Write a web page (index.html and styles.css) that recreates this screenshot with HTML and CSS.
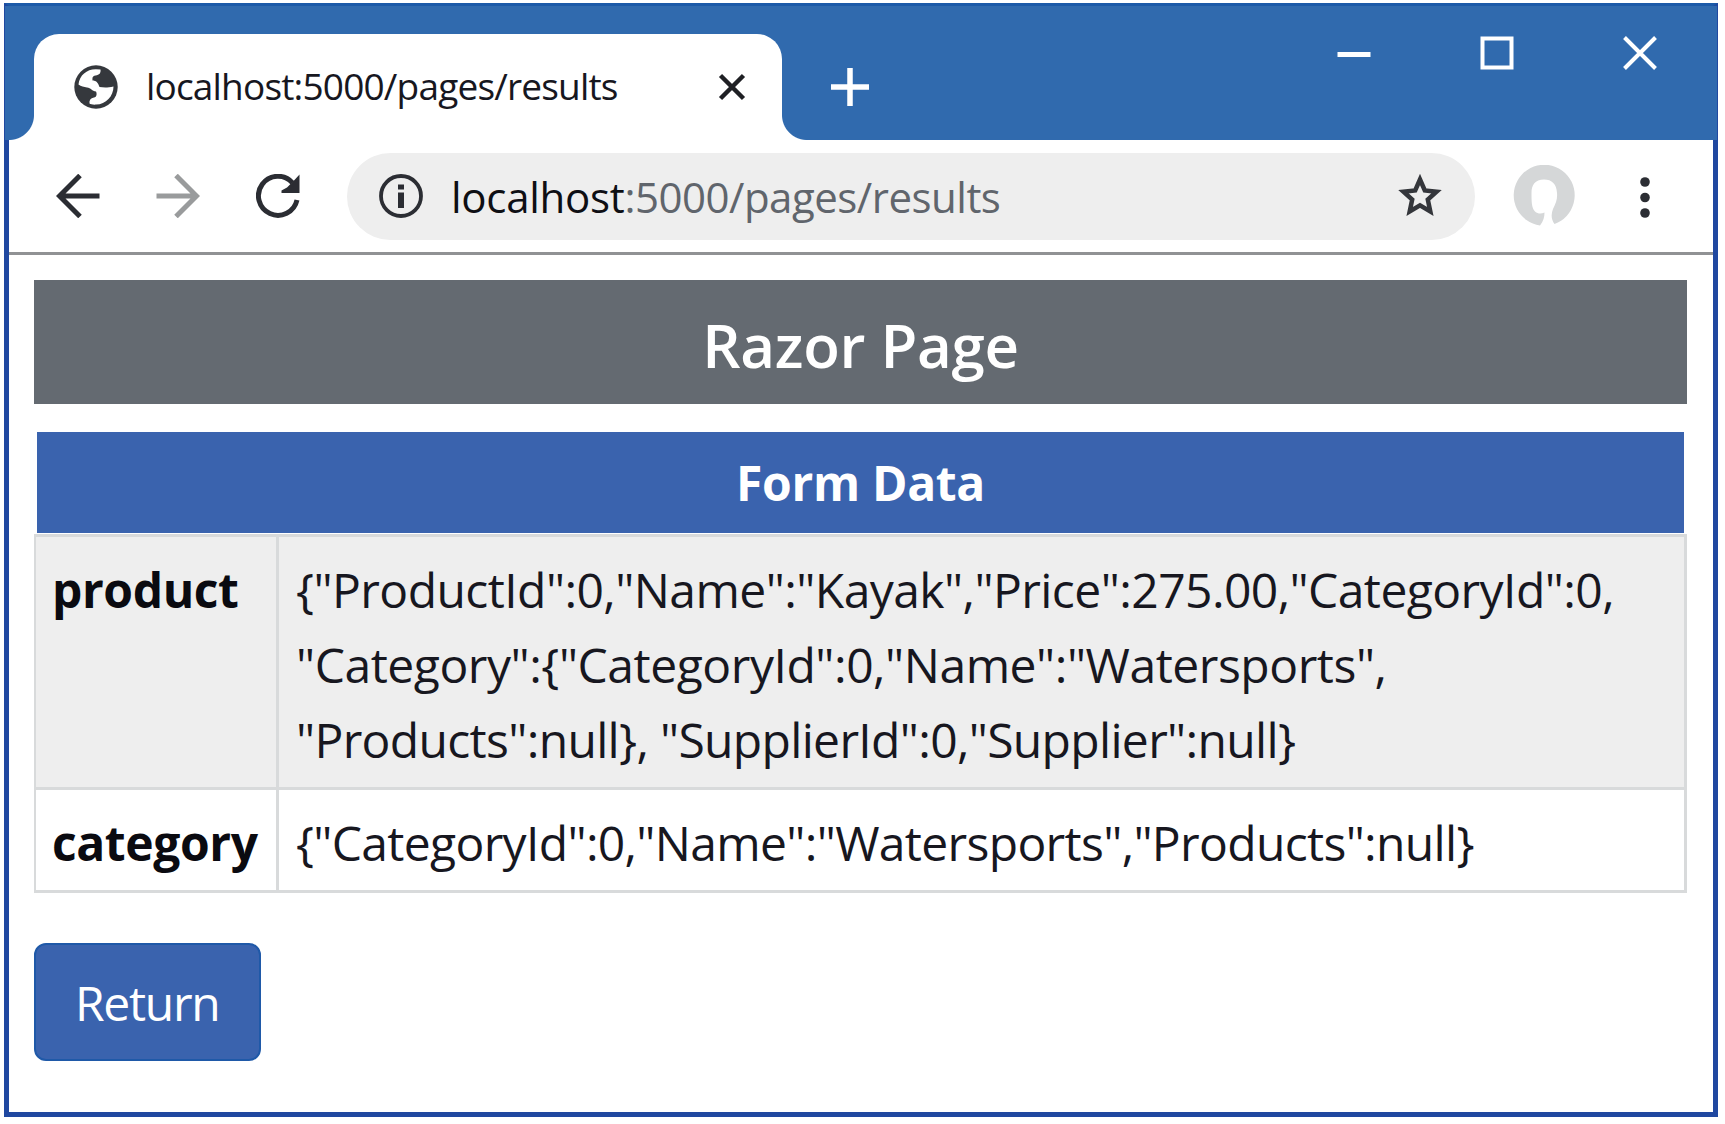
FILE: index.html
```
<!DOCTYPE html>
<html lang="en">
<head>
<meta charset="utf-8">
<title>localhost:5000/pages/results</title>
<link rel="stylesheet" href="styles.css">
</head>
<body>
<div class="window">
  <header class="titlebar">
    <div class="tab">
      <svg class="globe" width="44" height="44" viewBox="0 0 44 44">
        <circle cx="22" cy="22" r="21.7" fill="#35383d"/>
        <path fill="#fff" d="M4.500 19.500C5.500 10 13 4 22 4.200L26.500 4.500C27 8 25.500 10 21.500 10.500C18 11 18.500 13 18.500 15.500C22 15.500 24 17.500 25.500 22C29 22.500 33 23 39.500 21.500C39.500 31 32 39.500 22 39.600C19 39.800 16.500 39.300 15.500 38.600C15 35 16.500 33 20 32.500C23 32 23 28.500 22 26.500C18 26 17 23 13 22.500C10 22 7 21.500 4.500 19.500Z"/>
      </svg>
      <span class="tab-title">localhost:5000/pages/results</span>
      <svg class="tab-close" width="28" height="28" viewBox="0 0 28 28"><path d="M2.500 2.500L25.500 25.500M25.500 2.500L2.500 25.500"/></svg>
    </div>
    <svg class="new-tab" width="40" height="40" viewBox="0 0 40 40"><path d="M20 1V39M1 20H39"/></svg>
    <div class="controls">
      <svg width="34" height="34" viewBox="0 0 34 34"><path d="M.5 18.500H33.500" stroke-width="5"/></svg>
      <svg width="34" height="34" viewBox="0 0 34 34"><rect x="2.500" y="2.500" width="29" height="29"/></svg>
      <svg width="34" height="34" viewBox="0 0 34 34"><path d="M1.500 1.500L32.500 32.500M32.500 1.500L1.500 32.500"/></svg>
    </div>
  </header>

  <nav class="toolbar">
    <svg class="nav-icon" width="44" height="44" viewBox="0 0 44 44"><path d="M43.500 22H4M24 1.500L3.500 22L24 42.500"/></svg>
    <svg class="nav-icon forward" width="44" height="44" viewBox="0 0 44 44"><path d="M.5 22H40M20 1.500L40.500 22L20 42.500"/></svg>
    <svg class="nav-icon" width="44" height="44" viewBox="0 0 44 44"><path d="M41 26A19.500 19.500 0 1 1 36.500 8.800"/><path class="solid" d="M43.500 .5V19H25.500V16.500L31 13.500L38 6.500Z"/></svg>
    <div class="address">
      <svg class="info" width="44" height="44" viewBox="0 0 44 44"><circle cx="22" cy="22" r="20"/><path class="solid" d="M19 10.500H25V15.500H19ZM19 18.500H25V34H19Z"/></svg>
      <span class="url"><span class="host">localhost</span>:5000/pages/results</span>
      <svg class="star" width="46" height="46" viewBox="0 0 46 46"><path d="M23 6.500L27.800 17.500L39.500 18.700L30.800 26.500L33.300 38.500L23 32.300L12.700 38.500L15.200 26.500L6.500 18.700L18.200 17.500Z"/></svg>
    </div>
    <svg class="avatar" width="62" height="62" viewBox="0 0 62 62">
      <path fill="#d5d7d8" d="M27 60.500A30.500 30.500 0 1 1 41.500 59C38 54 38 49 40 44C43 38 44.500 34 44 28C43.500 19 39 14.500 31 14.500C22 14.500 18.500 20 18.500 28C18.500 36 18.500 43 22 46.500C25 49 28 49 31.500 47.500C31.500 52 30.500 56 27 60.500Z"/>
    </svg>
    <svg class="menu" width="10" height="44" viewBox="0 0 10 44"><circle cx="5" cy="8" r="4.800"/><circle cx="5" cy="23.500" r="4.800"/><circle cx="5" cy="39" r="4.800"/></svg>
  </nav>

  <main class="page">
    <h1 class="heading">Razor Page</h1>
    <table class="data">
      <colgroup><col class="key-column"><col></colgroup>
      <thead><tr><th colspan="2">Form Data</th></tr></thead>
      <tbody>
        <tr class="striped">
          <th>product</th>
          <td>{"ProductId":0,"Name":"Kayak","Price":275.00,"CategoryId":0,<br><span class="second">"Category":{"CategoryId":0,"Name":"Watersports",</span><br><span class="third">"Products":null}, "SupplierId":0,"Supplier":null}</span></td>
        </tr>
        <tr>
          <th>category</th>
          <td class="last">{"CategoryId":0,"Name":"Watersports","Products":null}</td>
        </tr>
      </tbody>
    </table>
    <a class="button">Return</a>
  </main>
</div>
</body>
</html>
```
FILE: styles.css
```
* { box-sizing: border-box; }

body {
  margin: 0;
  padding: 3px 0 0 4px;
  background: #fff;
  color: #17171f;
  font-family: "Open Sans", "Noto Sans", sans-serif;
}

svg { display: block; flex: none; fill: none; }

.window {
  width: 1714px;
  height: 1114px;
  border: 5px solid #2048a0;
  border-top: 3px solid #1c5aa8;
  background: #fff;
}

/* Title bar */
.titlebar {
  display: flex;
  align-items: flex-end;
  height: 134px;
  margin: 0 -4px;
  padding-left: 29px;
  background: #306aae;
}

.tab {
  position: relative;
  display: flex;
  align-items: center;
  width: 748px;
  height: 106px;
  padding: 0 36px 0 40px;
  border-radius: 25px 25px 0 0;
  background: #fff;
}

.tab::before,
.tab::after {
  content: "";
  position: absolute;
  bottom: 0;
  width: 25px;
  height: 25px;
}

.tab::before {
  right: 100%;
  background: radial-gradient(circle at 0 0, transparent 24.5px, #fff 25.5px);
}

.tab::after {
  left: 100%;
  background: radial-gradient(circle at 100% 0, transparent 24.5px, #fff 25.5px);
}

.tab-title {
  margin-left: 28px;
  padding-bottom: 3px;
  font-size: 37px;
  letter-spacing: -0.82px;
  white-space: nowrap;
}

.tab-close { margin-left: auto; stroke: #1f2024; stroke-width: 4.500; }

.new-tab { margin: 0 0 33px 48px; stroke: #fff; stroke-width: 5.500; }

.controls {
  display: flex;
  gap: 109px;
  margin: 0 60px 70px auto;
  stroke: #fff;
  stroke-width: 4;
}

/* Toolbar */
.toolbar {
  display: flex;
  align-items: center;
  height: 115px;
  padding-left: 47px;
  border-bottom: 3px solid #909294;
}

.nav-icon { margin-right: 56px; stroke: #2b2d33; stroke-width: 5; }
.nav-icon.forward { stroke: #999b9c; }
.toolbar .solid { fill: #2b2d33; stroke: none; }

.address {
  display: flex;
  align-items: center;
  width: 1128px;
  height: 87px;
  margin-left: -9px;
  padding: 0 32px 0 32px;
  border-radius: 44px;
  background: #eeeeee;
}

.info { stroke: #2b2d33; stroke-width: 3.800; }

.url {
  margin-left: 28px;
  color: #60656c;
  font-size: 42px;
  letter-spacing: -0.5px;
  white-space: nowrap;
}

.host { color: #0e0f14; letter-spacing: -0.28px; }

.star { margin-left: auto; stroke: #34363b; stroke-width: 4.500; }
.avatar { margin-left: 38px; }
.menu { margin-left: 65px; fill: #2b2d33; }

/* Page content */
.page { padding: 25px 26px 0 25px; }

.heading {
  height: 124px;
  margin: 0 0 28px;
  padding-top: 5px;
  background: #646a71;
  color: #fff;
  font-size: 60px;
  font-weight: 600;
  line-height: 121px;
  text-align: center;
  letter-spacing: -0.3px;
}

.data {
  width: 1653px;
  table-layout: fixed;
  border-collapse: separate;
  border-spacing: 0;
  font-size: 48px;
  line-height: 75px;
  text-align: left;
}

.key-column { width: 245px; }

.data thead th {
  height: 102px;
  padding: 13px 0 13px;
  border: solid #fff;
  border-width: 0 3px 1px;
  background: #3a63ae;
  color: #fff;
  text-align: center;
  letter-spacing: -0.3px;
}

.data tbody th,
.data tbody td {
  border: solid #d8dadb;
  border-width: 3px 3px 0 0;
  vertical-align: top;
  white-space: nowrap;
}

.data tbody th {
  padding: 15px 0 10px 16px;
  border-left-width: 2px;
  color: #0a0a10;
  letter-spacing: -0.4px;
}

.data tbody td {
  padding: 15px 0 10px 17px;
  letter-spacing: -0.57px;
}

.data tbody tr:last-child > * { border-bottom-width: 3px; }

.striped { background: #eeeeee; }
.second { letter-spacing: -0.46px; }
.third, .data tbody .last { letter-spacing: -0.67px; }

.button {
  display: flex;
  align-items: center;
  width: 227px;
  height: 118px;
  margin-top: 50px;
  padding-left: 39px;
  border: 2px solid #1f59a8;
  border-radius: 12px;
  background: #3a63ae;
  color: #fff;
  font-size: 48px;
  letter-spacing: -1.3px;
}
```
